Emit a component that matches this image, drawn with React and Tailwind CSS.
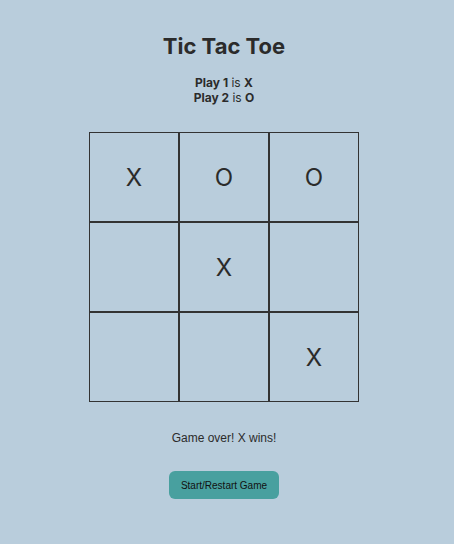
import React, { useState } from 'react';

const App = () => {
  const [board] = useState(['X', 'O', 'O', '', 'X', '', '', '', 'X']);

  return (
    <div className="min-h-[544px] w-full bg-[#b9cddc] text-[#2b2b2b]" style={{ fontFamily: 'Inter, sans-serif' }}>
      <div className="w-[448px] flex flex-col items-center">
        <h1 className="mt-[32px] text-[22px] leading-[28px] font-bold">Tic Tac Toe</h1>

        <div className="mt-[15px] text-[12px] leading-[15px] text-center">
          <p><b>Play 1</b> is <b>X</b></p>
          <p><b>Play 2</b> is <b>O</b></p>
        </div>

        {/* Tablero */}
        <div className="mt-[27px] grid grid-cols-[90px_90px_90px]">
          {board.map((cell, i) => (
            <div key={i} className="w-[90px] h-[90px] pt-[2px] border border-[#333333] flex items-center justify-center text-[24px]">
              {cell}
            </div>
          ))}
        </div>

        <p className="mt-[29px] text-[12px] leading-[15px]" style={{ fontFamily: '"Liberation Sans", Arial, sans-serif' }}>
          Game over! X wins!
        </p>

        <button className="mt-[25px] w-[110px] h-[28px] rounded-[6px] bg-[#48a09f] text-[10px] text-[#111]" style={{ fontFamily: '"Liberation Sans", Arial, sans-serif' }}>
          Start/Restart Game
        </button>
      </div>
    </div>
  );
};

export default App;
